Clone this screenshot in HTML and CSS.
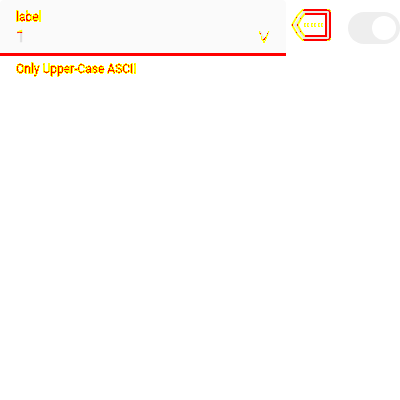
FILE: index.html
```
<!DOCTYPE html>
<html lang="en">
<head>
<meta charset="utf-8">
<title>Text field</title>
<link rel="stylesheet" href="styles.css">
</head>
<body>
<svg class="defs" width="0" height="0">
  <filter id="two-tone" x="-5%" y="-10%" width="110%" height="120%" color-interpolation-filters="sRGB">
    <feComponentTransfer in="SourceAlpha" result="edge"><feFuncA type="linear" slope="50" intercept="-2"/></feComponentTransfer>
    <feFlood flood-color="#ff0"/>
    <feComposite in2="edge" operator="in" result="yellow"/>
    <feComponentTransfer in="SourceAlpha" result="core"><feFuncA type="linear" slope="50" intercept="-41"/></feComponentTransfer>
    <feFlood flood-color="#f00"/>
    <feComposite in2="core" operator="in" result="red"/>
    <feMerge><feMergeNode in="yellow"/><feMergeNode in="red"/></feMerge>
  </filter>
</svg>
<main class="row">
  <section class="field">
    <div class="box">
      <div class="content">
        <label class="label marked">label</label>
        <span class="value">1</span>
      </div>
      <svg class="mark" width="12" height="14" viewBox="0 0 12 14" shape-rendering="crispEdges">
        <path d="M1 1L5.500 11L10 1" fill="none" stroke="#ededed" stroke-width="2"/>
        <path d="M.5 1v2h1v2M2.500 6v3h1v2M4.500 10v2h1v-1M6.500 11v-3h1v-3M8.500 6v-2M9.500 1v2" fill="none" stroke="#ff0"/>
        <path d="M1 3h1v1h-1zM8 3h1v1h-1zM4 9h1v1h-1zM5 8h1v2h-1zM6 7h1v1h-1z" fill="#f00"/>
      </svg>
    </div>
    <p class="helper marked">Only Upper-Case ASCII</p>
  </section>
  <svg class="tag" width="42" height="34" viewBox="290 8 42 34">
    <path d="M304 12H328V38H304L295 25Z" fill="none" stroke="#ebebeb" stroke-width="2.500"/>
    <path d="M303 9.500L297.500 15.500L292 25L297.500 34.500L303 40.500M305 13.500L301.500 18L297.500 25L301.500 32L305 36.500" fill="none" stroke="#ff0" stroke-width="1.800"/>
    <path d="M303 10H328.500L330 11.500V38.500L328.500 40H303M305 14H326V36H305" fill="none" stroke="#f00" stroke-width="2"/>
    <path d="M302 9.500H304M327 9.500H329L330.500 11V12M302 40.500H304M327 40.500H329L330.500 39V38" fill="none" stroke="#ff0"/>
    <path d="M292 24h1v2h-1zM297 24h1v2h-1zM296 17h1v1h-1zM296 32h1v1h-1zM300 18h1v1h-1zM300 31h1v1h-1z" fill="#f00"/>
    <path d="M304 23h2v4h-2zM307 23h2v4h-2zM311 23h2v4h-2zM314 23h2v4h-2zM318 23h2v4h-2zM321 23h2v4h-2z" fill="#ff0"/>
    <path d="M305 24h1v2h-1zM308 24h1v2h-1zM312 24h1v2h-1zM315 24h1v2h-1zM319 24h1v2h-1zM322 24h1v2h-1z" fill="#ededed"/>
  </svg>
  <div class="switch"><span class="knob"></span></div>
</main>
</body>
</html>
```
FILE: styles.css
```
* { box-sizing: border-box; }
body {
  margin: 0;
  background: #fff;
  font-family: Roboto, "Liberation Sans", sans-serif;
  overflow: hidden;
}
.defs { display: block; }
.row { display: flex; align-items: flex-start; width: 400px; }
.field { width: 286px; }
.box {
  display: flex;
  justify-content: space-between;
  height: 56px;
  padding: 9px 15px 0 16px;
  background: #fafafa;
  border-bottom: 3px solid #f00;
  border-radius: 4px 4px 0 0;
}
.content { display: flex; flex-direction: column; }
.marked {
  font-size: 12px;
  line-height: 16px;
  color: #000;
  -webkit-text-stroke: 0.4px #000;
  filter: url(#two-tone);
}
.value {
  font-size: 16px;
  line-height: 24px;
  font-weight: 500;
  color: transparent;
  -webkit-text-stroke: 0.4px transparent;
  background: linear-gradient(#ff0 0 7px, #f00 7px 8px, #e0e0e0 8px);
  background-clip: text;
  -webkit-background-clip: text;
}
.mark { margin-top: 21px; }
.helper { margin: 5px 16px 0; }
.tag { margin: 8px 16px 0 4px; }
.switch {
  display: flex;
  justify-content: flex-end;
  width: 52px;
  height: 32px;
  margin-top: 12px;
  padding: 4px;
  background: #eee;
  border-radius: 16px;
}
.knob { width: 24px; height: 24px; border-radius: 50%; background: #fff; }
```
